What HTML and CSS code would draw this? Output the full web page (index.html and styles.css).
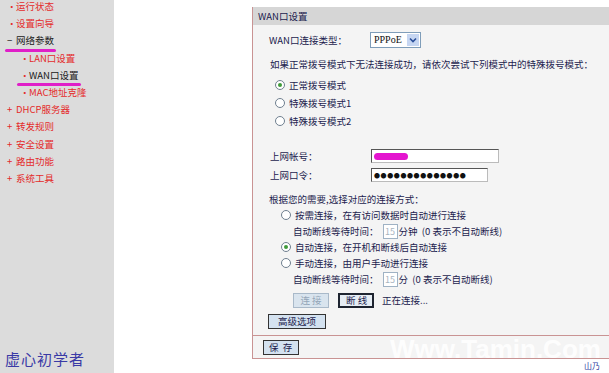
FILE: index.html
```html
<!DOCTYPE html>
<html lang="zh-CN">
<head>
    <meta charset="UTF-8">
    <title>WAN口设置</title>
    <link rel="stylesheet" href="styles.css">
</head>
<body>
    <div class="page">
        <nav class="menu">
            <ul class="menu-list">
                <li class="menu-item"><span class="dot">•</span>运行状态</li>
                <li class="menu-item"><span class="dot">•</span>设置向导</li>
                <li class="menu-item open"><span class="scribble wide"><span class="dot">−</span>网络参数</span></li>
                <li class="menu-item sub"><span class="dot">•</span>LAN口设置</li>
                <li class="menu-item sub open"><span class="scribble"><span class="dot">•</span>WAN口设置</span></li>
                <li class="menu-item sub"><span class="dot">•</span>MAC地址克隆</li>
                <li class="menu-item"><span class="dot">+</span>DHCP服务器</li>
                <li class="menu-item"><span class="dot">+</span>转发规则</li>
                <li class="menu-item"><span class="dot">+</span>安全设置</li>
                <li class="menu-item"><span class="dot">+</span>路由功能</li>
                <li class="menu-item"><span class="dot">+</span>系统工具</li>
            </ul>
            <div class="sign">虚心初学者</div>
        </nav>

        <main class="main">
            <div class="panel">
                <div class="panel-head">WAN口设置</div>
                <div class="panel-body">
                    <div class="row type-row">
                        <span class="label">WAN口连接类型：</span>
                        <span class="select">PPPoE<span class="select-btn"><svg width="8" height="6" viewBox="0 0 8 6"><path d="M1 1.5 L4 4.5 L7 1.5" fill="none" stroke="#2a4f9a" stroke-width="1.6"/></svg></span></span>
                    </div>
                    <div class="row note">如果正常拨号模式下无法连接成功，请依次尝试下列模式中的特殊拨号模式：</div>
                    <div class="row dial first"><span class="radio checked"></span>正常拨号模式</div>
                    <div class="row dial"><span class="radio"></span>特殊拨号模式1</div>
                    <div class="row dial"><span class="radio"></span>特殊拨号模式2</div>

                    <div class="row account">
                        <span class="label">上网帐号：</span>
                        <span class="field long"><span class="blot"></span></span>
                    </div>
                    <div class="row password">
                        <span class="label">上网口令：</span>
                        <span class="field short">●●●●●●●●●●●●●●</span>
                    </div>

                    <div class="row need">根据您的需要,选择对应的连接方式：</div>
                    <div class="row conn"><span class="radio"></span>按需连接，在有访问数据时自动进行连接</div>
                    <div class="row wait">自动断线等待时间：<span class="mini">15</span>分钟 &nbsp;(0 表示不自动断线)</div>
                    <div class="row conn"><span class="radio checked"></span>自动连接，在开机和断线后自动连接</div>
                    <div class="row conn"><span class="radio"></span>手动连接，由用户手动进行连接</div>
                    <div class="row wait">自动断线等待时间：<span class="mini">15</span>分 &nbsp;(0 表示不自动断线)</div>

                    <div class="row actions">
                        <span class="btn disabled">连 接</span>
                        <span class="btn strong">断 线</span>
                        <span class="status">正在连接...</span>
                    </div>
                    <div class="row advanced"><span class="btn">高级选项</span></div>
                </div>
                <div class="panel-foot"><span class="btn">保 存</span></div>
            </div>
            <div class="corner">山乃</div>
        </main>
    </div>
    <div class="watermark">Www.Tamin.Com</div>
</body>
</html>
```

FILE: styles.css
```css
body {
    margin: 0;
    font-family: "Noto Sans CJK SC", "DejaVu Sans", sans-serif;
    font-size: 9.5px;
    color: #1c1c4e;
    background-color: #fff;
    overflow: hidden;
}
.page {
    display: flex;
    height: 373px;
}

/* left menu */
.menu {
    width: 114px;
    flex-shrink: 0;
    background-color: #dcdcdc;
    display: flex;
    flex-direction: column;
}
.menu-list {
    list-style: none;
    margin: -2px 0 0;
    padding: 0;
}
.menu-item {
    line-height: 17.2px;
    padding-left: 7px;
    color: #e42b2b;
    white-space: nowrap;
}
.menu-item.sub {
    padding-left: 20px;
}
.menu-item.open {
    color: #202020;
}
.menu-item.sub.open {
    padding-left: 17px;
}
.dot {
    display: inline-block;
    width: 9px;
    color: #e42b2b;
}
.menu-item.open .dot {
    color: #202020;
}
.menu-item.sub.open .dot {
    color: #e42b2b;
    margin-left: 3px;
}
.scribble {
    position: relative;
    display: inline-block;
}
.scribble::after {
    content: "";
    position: absolute;
    left: 0;
    right: -2px;
    bottom: -2px;
    height: 3px;
    border-radius: 2px;
    background-color: #e01fc8;
}
.scribble.wide::after {
    left: -2px;
}
.sign {
    margin-top: auto;
    padding: 0 0 4px 5px;
    font-size: 15px;
    color: #3a3aa6;
    letter-spacing: 1px;
}

/* main panel */
.main {
    flex: 1;
    padding: 7px 0 0 138px;
}
.panel {
    border-left: 1px solid #c99393;
    border-bottom: 1px solid #c99393;
    background-color: #f4f4f4;
}
.panel-head {
    height: 18px;
    line-height: 18px;
    padding-left: 5px;
    background-color: #d6d6d6;
}
.panel-body {
    height: 310px;
    padding-left: 16px;
    display: flex;
    flex-direction: column;
}
.panel-foot {
    height: 22px;
    border-top: 1px solid #c99393;
    padding-left: 10px;
    display: flex;
    align-items: center;
}
.row {
    display: flex;
    align-items: center;
    height: 16px;
    white-space: nowrap;
}
.label {
    width: 101px;
}
.type-row { margin-top: 7px; }
.note { margin-top: 8px; padding-left: 1px; }
.dial { height: 18px; padding-left: 6px; }
.dial.first { margin-top: 4px; }
.account { margin-top: 18px; padding-left: 1px; }
.password { margin-top: 3px; padding-left: 1px; }
.need { margin-top: 8px; }
.conn { padding-left: 12px; }
.wait { padding-left: 24px; }
.actions { margin-top: 6px; height: 14px; padding-left: 24px; }
.advanced { margin-top: 7px; height: 15px; margin-left: -1px; }

/* controls */
.select {
    position: relative;
    width: 46px;
    height: 14px;
    line-height: 14px;
    padding-left: 3px;
    border: 1px solid #7f9db9;
    background-color: #fff;
    font-family: "Liberation Serif", serif;
    font-size: 10px;
    color: #111;
    box-sizing: content-box;
}
.select-btn {
    position: absolute;
    right: 1px;
    top: 1px;
    width: 12px;
    height: 12px;
    background-color: #c6d6f2;
    display: flex;
    align-items: center;
    justify-content: center;
}
.radio {
    width: 8px;
    height: 8px;
    margin-right: 4px;
    border: 1px solid #6f7f8f;
    border-radius: 50%;
    background-color: #fff;
    display: inline-flex;
    align-items: center;
    justify-content: center;
}
.radio.checked::after {
    content: "";
    width: 4px;
    height: 4px;
    border-radius: 50%;
    background-color: #3f9a3a;
}
.field {
    height: 12px;
    border: 1px solid #555;
    border-right-color: #bbb;
    border-bottom-color: #bbb;
    background-color: #fff;
    display: flex;
    align-items: center;
    padding-left: 2px;
}
.field.long { width: 124px; }
.field.short {
    width: 113px;
    font-size: 6px;
    letter-spacing: 0.6px;
    color: #111;
}
.blot {
    width: 34px;
    height: 7px;
    border-radius: 4px;
    background-color: #e415cf;
}
.mini {
    width: 13px;
    height: 13px;
    margin: 0 1px 0 4px;
    border: 1px solid #9fb2c4;
    background-color: #fff;
    color: #a8b4c0;
    font-size: 9px;
    line-height: 13px;
    text-align: center;
}
.btn {
    display: inline-block;
    height: 13px;
    line-height: 13px;
    padding: 0 6px;
    border: 1px solid #333;
    background-color: #d4e2f0;
    color: #1c1c4e;
}
.btn.disabled {
    width: 22px;
    text-align: center;
    border-color: #a9b9c9;
    color: #94a6b8;
    background-color: #d9e4ee;
}
.btn.strong {
    width: 20px;
    height: 11px;
    line-height: 11px;
    text-align: center;
    margin-left: 9px;
    border: 2px solid #1e2430;
    background-color: #e6edf4;
}
.advanced .btn {
    height: 13px;
    padding: 0 4px;
    width: 48px;
    text-align: center;
}
.panel-foot .btn {
    padding: 0 5px;
    letter-spacing: 1px;
}
.status {
    margin-left: 8px;
}
.corner {
    text-align: right;
    padding: 1px 9px 0 0;
    font-size: 8px;
    color: #2d3a9c;
}

/* site watermark */
.watermark {
    position: absolute;
    left: 390px;
    top: 334px;
    font-family: "Liberation Sans", sans-serif;
    font-size: 26px;
    font-weight: bold;
    color: rgba(255, 255, 255, 0.9);
    white-space: nowrap;
    pointer-events: none;
}
```
